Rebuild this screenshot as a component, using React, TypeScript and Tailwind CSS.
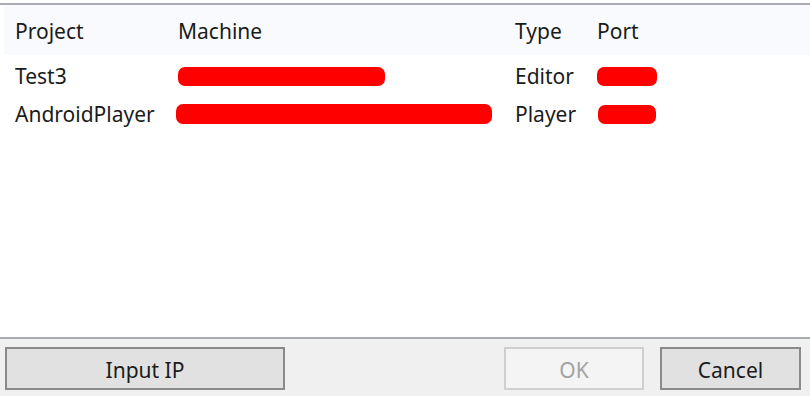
export default function App() {
  const font = { fontFamily: '"Noto Sans", "Open Sans", sans-serif' };
  return (
    <div className="w-[810px] h-[396px] bg-white flex flex-col text-[21px] text-[#1b1b1b]" style={font}>
      <div className="h-[3px] bg-white" />
      <div className="h-[2px] bg-[#a9adb3]" />
      <div className="flex-1 flex flex-col pl-[4px] bg-white">
        <div className="h-[50px] bg-[#f8fafd] flex items-center pt-[4px]">
          <div className="w-[174px] pl-[11px]">Project</div>
          <div className="w-[337px]">Machine</div>
          <div className="w-[82px]">Type</div>
          <div>Port</div>
        </div>
        <div className="h-[2px]" />
        <div className="h-[38px] flex items-center">
          <div className="w-[174px] pl-[11px] pt-[2px]">Test3</div>
          <div className="w-[337px]">
            <div className="w-[207px] h-[19px] rounded-[7px] bg-[#ff0000]" />
          </div>
          <div className="w-[82px] pt-[2px]">Editor</div>
          <div className="w-[60px] h-[19px] rounded-[7px] bg-[#ff0000]" />
        </div>
        <div className="h-[38px] flex items-center">
          <div className="w-[172px] pl-[11px] pt-[2px]">AndroidPlayer</div>
          <div className="w-[339px]">
            <div className="w-[316px] h-[20px] rounded-[7px] bg-[#ff0000]" />
          </div>
          <div className="w-[83px] pt-[2px]">Player</div>
          <div className="w-[58px] h-[19px] rounded-[7px] bg-[#ff0000]" />
        </div>
      </div>
      <div className="h-[2px] bg-[#a9adb3]" />
      <div className="h-[57px] bg-[#f0f0f0] flex items-start pt-[8px] px-[5px]">
        <button className="w-[280px] h-[43px] border-2 border-[#8a8a8a] bg-[#e1e1e1] text-[21px] text-[#1b1b1b] flex items-center justify-center pt-[4px]">
          Input IP
        </button>
        <div className="flex-1" />
        <button className="w-[140px] h-[43px] border-2 border-[#cfcfcf] bg-[#f4f4f4] text-[21px] text-[#a3a3a3] flex items-center justify-center pt-[4px]">
          OK
        </button>
        <button className="ml-[16px] mr-[4px] w-[141px] h-[43px] border-2 border-[#8a8a8a] bg-[#e1e1e1] text-[21px] text-[#1b1b1b] flex items-center justify-center pt-[4px]">
          Cancel
        </button>
      </div>
    </div>
  );
}
